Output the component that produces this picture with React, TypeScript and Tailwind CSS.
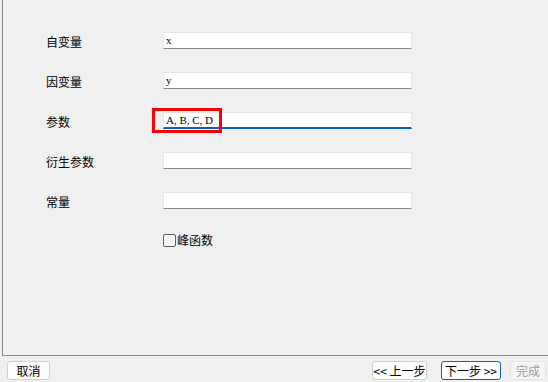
const rows = [
  { label: '自变量', value: 'x' },
  { label: '因变量', value: 'y' },
  { label: '参数', value: 'A, B, C, D', focused: true },
  { label: '衍生参数', value: '' },
  { label: '常量', value: '' },
];

const cjk = "font-['Microsoft_YaHei','Noto_Sans_CJK_SC',sans-serif]";

function Field({ value, focused }: { value: string; focused?: boolean }) {
  return (
    <div
      className={`relative h-[17px] w-[249px] border border-[#e6e6e6] bg-white ${
        focused ? 'border-b-2 border-b-[#0067c0]' : 'border-b-[#868686]'
      }`}
    >
      <span className="absolute left-[2px] top-[1px] font-['Liberation_Serif',serif] text-[11px] leading-[13px] text-black">
        {value}
      </span>
    </div>
  );
}

function Btn({
  children,
  primary,
  disabled,
  className = '',
}: {
  children: React.ReactNode;
  primary?: boolean;
  disabled?: boolean;
  className?: string;
}) {
  return (
    <div
      className={`flex h-[19px] items-center justify-center rounded-[3px] border text-[12px] ${cjk} ${
        disabled
          ? 'border-[#e5e5e5] bg-[#f5f5f5] text-[#9d9d9d]'
          : primary
          ? 'border-[#0067c0] bg-[#fdfdfd] text-black'
          : 'border-[#d0d0d0] bg-[#fdfdfd] text-black'
      } ${className}`}
    >
      {children}
    </div>
  );
}

export default function App() {
  return (
    <div className={`flex h-[382px] w-[548px] flex-col overflow-hidden bg-[#f0f0f0] ${cjk}`}>
      {/* 内容面板 */}
      <div className="relative ml-[2px] h-[356px] border-b border-l border-[#8a8a8a]">
        <div className="flex flex-col gap-[23px] pt-[32px]">
          {rows.map((r) => (
            <div key={r.label} className="flex h-[17px] items-center">
              <span className="ml-[43px] mt-[3px] w-[117px] text-[12px] leading-[14px] text-black">{r.label}</span>
              <Field value={r.value} focused={r.focused} />
            </div>
          ))}
        </div>

        {/* 峰函数 */}
        <label className="ml-[160px] mt-[24px] flex items-center gap-[1px]">
          <span className="h-[13px] w-[13px] rounded-[2px] border border-[#5e5e5e] bg-[#f8f8f8]" />
          <span className="text-[12px] leading-[14px] text-black">峰函数</span>
        </label>

        {/* 标注框 */}
        <div className="pointer-events-none absolute left-[149px] top-[108px] h-[25px] w-[70px] border-[3px] border-[#ff0000]" />
      </div>

      {/* 底部按钮 */}
      <div className="flex items-center pt-[5px]">
        <Btn className="ml-[7px] w-[43px]">取消</Btn>
        <div className="flex-1" />
        <Btn className="w-[55px]">&lt;&lt; 上一步</Btn>
        <Btn primary className="ml-[14px] w-[60px]">下一步 &gt;&gt;</Btn>
        <Btn disabled className="ml-[9px] mr-[2px] w-[36px]">完成</Btn>
      </div>
    </div>
  );
}
